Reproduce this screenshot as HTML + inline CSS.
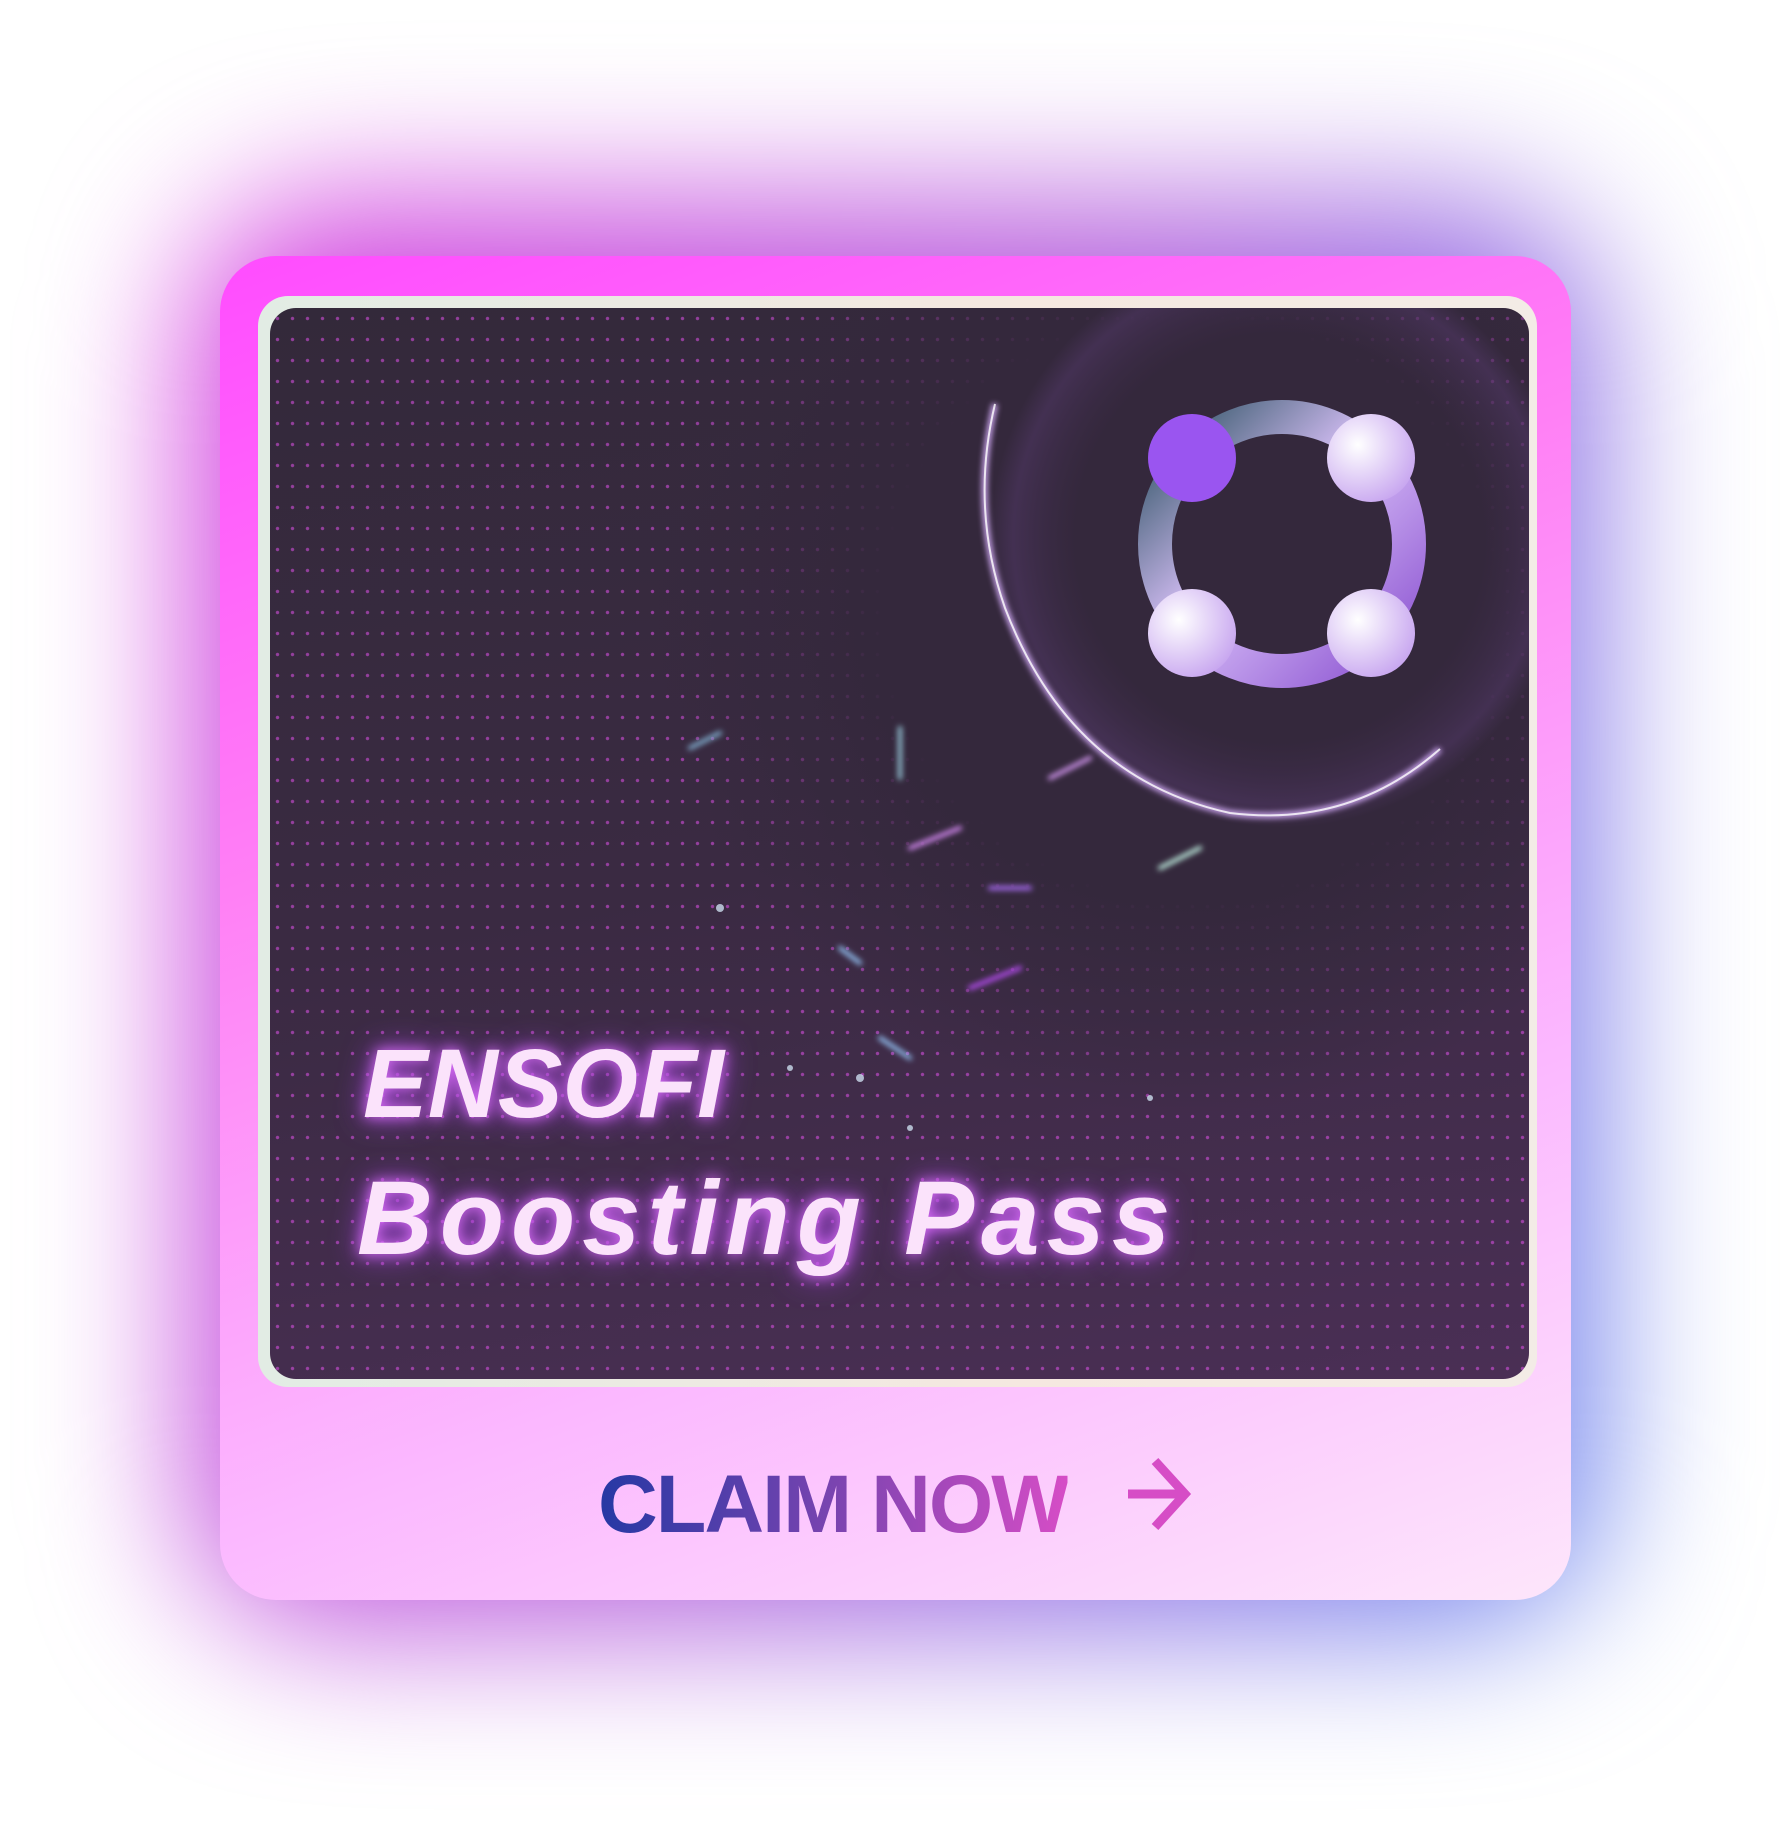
<!DOCTYPE html><html><head><style>
html,body{margin:0;padding:0;width:1792px;height:1848px;background:#fff;overflow:hidden;position:relative;font-family:"Liberation Sans",sans-serif}
.glow{position:absolute;left:190px;top:200px;width:1410px;height:1430px;border-radius:140px;background:linear-gradient(110deg,#d83ee0 0%,#b460dc 50%,#6a8cf0 100%);filter:blur(75px);opacity:1}
.card{position:absolute;left:220px;top:256px;width:1351px;height:1344px;border-radius:56px;background:linear-gradient(160deg,#ff4cff 0%,#ff80f5 35%,#fbb8ff 70%,#fde6fb 100%);overflow:hidden}
.frame{position:absolute;left:38px;top:40px;width:1279px;height:1091px;border-radius:30px;background:linear-gradient(90deg,#e2ece4,#f5e8e0 60%,#f3ece6)}
.img{position:absolute;left:12px;top:12px;right:8px;bottom:8px;border-radius:26px;overflow:hidden;background:linear-gradient(170deg,#33293a 0%,#3a2a42 50%,#4a2f55 100%)}
.dots{position:absolute;inset:0;background-image:radial-gradient(circle,rgba(220,80,230,.75) 1.4px,transparent 2px);background-size:15px 21px;opacity:.75}
.mask{position:absolute;left:380px;top:-40px;width:900px;height:850px;background:radial-gradient(ellipse at 60% 40%,#34283c 40%,rgba(52,40,60,0) 70%)}
.t1,.t2{position:absolute;font-weight:bold;font-style:italic;color:#fbe3fb;text-shadow:0 0 14px #e070ff,0 0 30px #a040e0}
.t1{left:93px;top:720px;font-size:97px}
.t2{left:87px;top:851px;font-size:105px;letter-spacing:7px}
.claim{position:absolute;left:378px;top:1202px;font-size:82px;font-weight:bold;letter-spacing:-2px;transform:scaleX(1.01);transform-origin:left top;background:linear-gradient(90deg,#2538a4,#7a44b0 50%,#d64dc6);-webkit-background-clip:text;background-clip:text;color:transparent;white-space:nowrap}
</style></head><body>
<div class="glow"></div>
<div class="card">
 <div class="frame"><div class="img">
  <div class="dots"></div>
  <div class="mask"></div>
  <svg width="1260" height="1072" style="position:absolute;left:0;top:0">
   <defs>
    <linearGradient id="r" x1="0" y1="0" x2="1" y2="1"><stop offset="0" stop-color="#2a5060"/><stop offset=".45" stop-color="#d8c0f8"/><stop offset="1" stop-color="#8a50d0"/></linearGradient>
    <radialGradient id="b" cx=".35" cy=".35" r=".7"><stop offset="0" stop-color="#fff"/><stop offset="1" stop-color="#c9a8f0"/></radialGradient>
    <radialGradient id="hg" cx=".5" cy=".5" r=".5"><stop offset=".7" stop-color="#6a3a8a" stop-opacity="0"/><stop offset=".92" stop-color="#9a60d0" stop-opacity=".15"/><stop offset="1" stop-color="#9a60d0" stop-opacity="0"/></radialGradient>
    <filter id="bl"><feGaussianBlur stdDeviation="3"/></filter>
   </defs>
   <circle cx="1010" cy="230" r="290" fill="url(#hg)"/>
   <path id="arc" d="M725 96 Q700 200 735 300 Q800 470 960 505 Q1080 520 1170 441" fill="none" stroke="#d9b0ff" stroke-width="6" filter="url(#bl)" opacity=".9"/>
   <path d="M725 96 Q700 200 735 300 Q800 470 960 505 Q1080 520 1170 441" fill="none" stroke="#fff" stroke-width="2" opacity=".8"/>
   <g stroke-linecap="round" stroke-width="4" filter="url(#bl)">
    <line x1="420" y1="440" x2="450" y2="425" stroke="#8bd"/>
    <line x1="720" y1="580" x2="760" y2="580" stroke="#b070ff"/>
    <line x1="890" y1="560" x2="930" y2="540" stroke="#cfe"/>
    <line x1="700" y1="680" x2="750" y2="660" stroke="#c050ff"/>
    <line x1="610" y1="730" x2="640" y2="750" stroke="#9cf"/>
    <line x1="570" y1="640" x2="590" y2="655" stroke="#9cf"/>
    <line x1="630" y1="420" x2="630" y2="470" stroke="#9cd"/>
    <line x1="640" y1="540" x2="690" y2="520" stroke="#e090ff"/>
    <line x1="780" y1="470" x2="820" y2="450" stroke="#e0a0ff"/>
   </g>
   <g fill="#cde" opacity=".8"><circle cx="450" cy="600" r="4"/><circle cx="590" cy="770" r="4"/><circle cx="640" cy="820" r="3"/><circle cx="880" cy="790" r="3"/><circle cx="520" cy="760" r="3"/></g>
   <circle cx="1012" cy="236" r="127" fill="none" stroke="url(#r)" stroke-width="34"/>
   <circle cx="922" cy="150" r="44" fill="#9a55f0"/>
   <circle cx="1101" cy="150" r="44" fill="url(#b)"/>
   <circle cx="922" cy="325" r="44" fill="url(#b)"/>
   <circle cx="1101" cy="325" r="44" fill="url(#b)"/>
  </svg>
  <div class="t1">ENSOFI</div>
  <div class="t2">Boosting Pass</div>
 </div></div>
 <div class="claim">CLAIM NOW</div>
 <svg width="70" height="76" style="position:absolute;left:905px;top:1200px"><path d="M3 38 H60 M30 5 L60 38 L30 71" fill="none" stroke="#d64dc6" stroke-width="9"/></svg>
</div>
</body></html>
